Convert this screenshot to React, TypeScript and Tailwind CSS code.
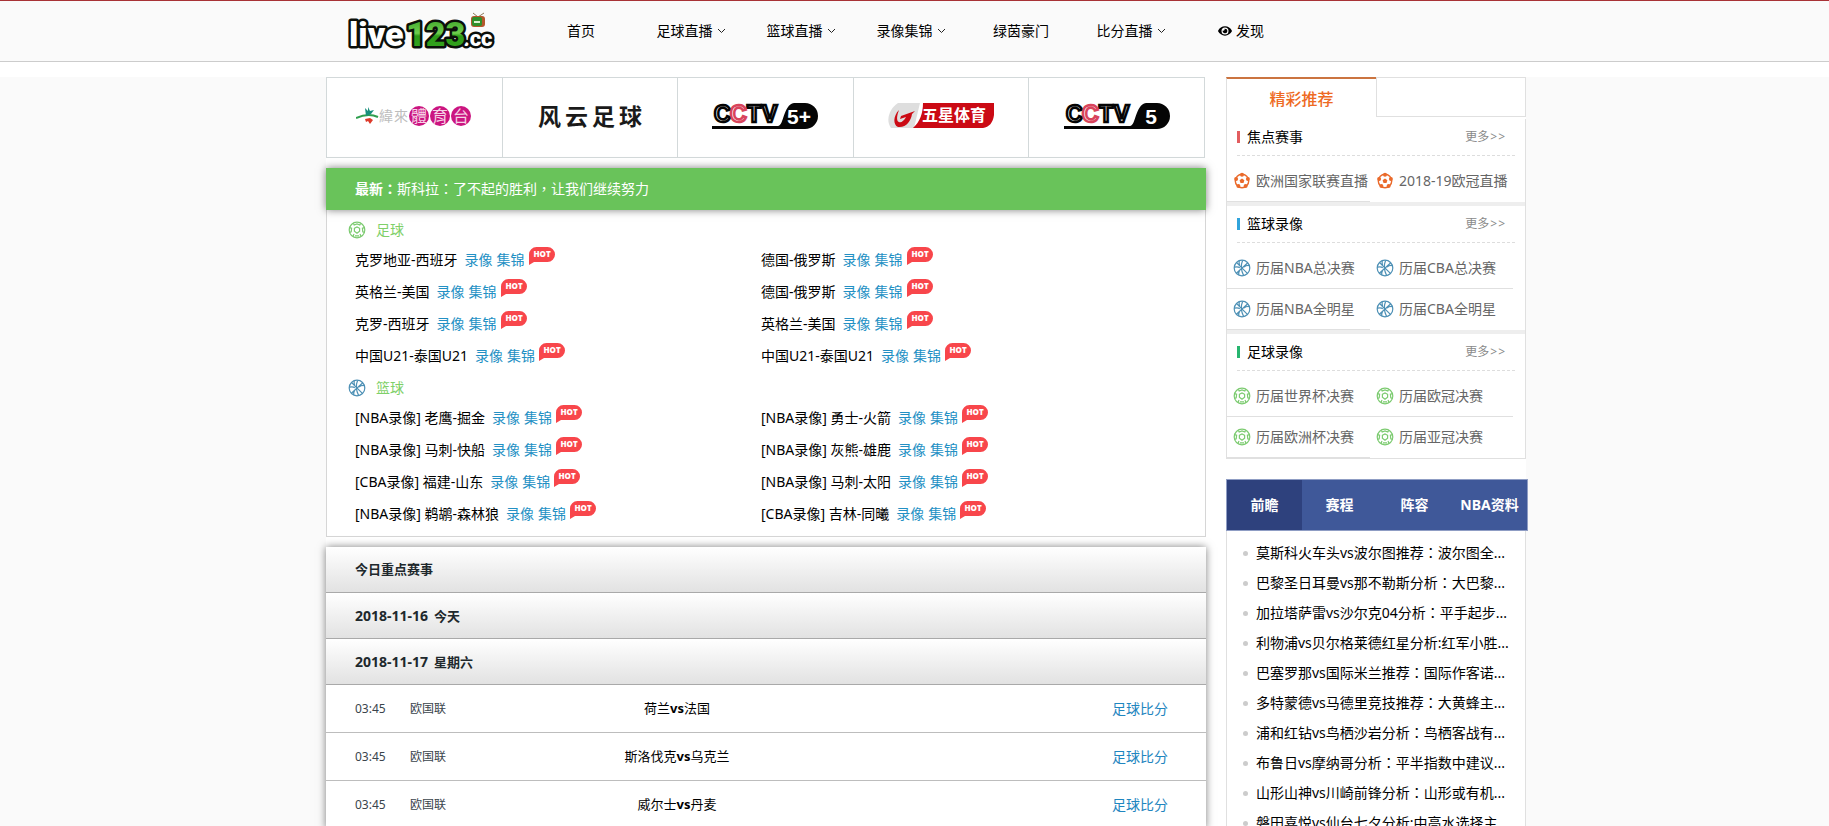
import React from "react";
import { FaEye } from "react-icons/fa";

interface INavItem {
  label: string;
  dropdown?: boolean;
  eye?: boolean;
}

interface ISection {
  title: string;
  bar: string;
  icon: "orange" | "basketball" | "football";
  items: string[];
}

const navItems: INavItem[] = [
  { label: "首页" },
  { label: "足球直播", dropdown: true },
  { label: "篮球直播", dropdown: true },
  { label: "录像集锦", dropdown: true },
  { label: "绿茵豪门" },
  { label: "比分直播", dropdown: true },
  { label: "发现", eye: true },
];

const footballVideos = [
  "克罗地亚-西班牙",
  "德国-俄罗斯",
  "英格兰-美国",
  "德国-俄罗斯",
  "克罗-西班牙",
  "英格兰-美国",
  "中国U21-泰国U21",
  "中国U21-泰国U21",
];

const basketballVideos = [
  "[NBA录像] 老鹰-掘金",
  "[NBA录像] 勇士-火箭",
  "[NBA录像] 马刺-快船",
  "[NBA录像] 灰熊-雄鹿",
  "[CBA录像] 福建-山东",
  "[NBA录像] 马刺-太阳",
  "[NBA录像] 鹈鹕-森林狼",
  "[CBA录像] 吉林-同曦",
];

const matches = [
  { time: "03:45", league: "欧国联", home: "荷兰", away: "法国" },
  { time: "03:45", league: "欧国联", home: "斯洛伐克", away: "乌克兰" },
  { time: "03:45", league: "欧国联", home: "威尔士", away: "丹麦" },
];

const sections: ISection[] = [
  {
    title: "焦点赛事",
    bar: "bg-[#e25d5f]",
    icon: "orange",
    items: ["欧洲国家联赛直播", "2018-19欧冠直播"],
  },
  {
    title: "篮球录像",
    bar: "bg-[#31a4dc]",
    icon: "basketball",
    items: ["历届NBA总决赛", "历届CBA总决赛", "历届NBA全明星", "历届CBA全明星"],
  },
  {
    title: "足球录像",
    bar: "bg-[#27b56f]",
    icon: "football",
    items: ["历届世界杯决赛", "历届欧冠决赛", "历届欧洲杯决赛", "历届亚冠决赛"],
  },
];

const tabs = ["前瞻", "赛程", "阵容", "NBA资料"];

const news = [
  "莫斯科火车头vs波尔图推荐：波尔图全...",
  "巴黎圣日耳曼vs那不勒斯分析：大巴黎...",
  "加拉塔萨雷vs沙尔克04分析：平手起步...",
  "利物浦vs贝尔格莱德红星分析:红军小胜...",
  "巴塞罗那vs国际米兰推荐：国际作客诺...",
  "多特蒙德vs马德里竞技推荐：大黄蜂主...",
  "浦和红钻vs鸟栖沙岩分析：鸟栖客战有...",
  "布鲁日vs摩纳哥分析：平半指数中建议...",
  "山形山神vs川崎前锋分析：山形或有机...",
  "磐田喜悦vs仙台七夕分析:中高水选择主...",
];

// full-width colons and commas sit in the middle of their box in the TC face
function Punctuated({ text }: { text: string }) {
  return (
    <>
      {text.split(/([：，])/).map((part, i) =>
        i % 2 ? (
          <span key={i} className="font-['Noto_Sans_CJK_TC',sans-serif] leading-none">
            {part}
          </span>
        ) : (
          part
        )
      )}
    </>
  );
}

function AngleDown() {
  return (
    <svg viewBox="0 0 9 6" className="h-[6px] w-[9px]" fill="none" stroke="#222" aria-hidden="true">
      <path d="M1 1l3.5 3.5L8 1" />
    </svg>
  );
}

function FootballIcon() {
  return (
    <svg
      viewBox="0 0 18 18"
      className="size-[18px] shrink-0"
      fill="none"
      stroke="#7ccb70"
      strokeWidth="1.2"
      aria-hidden="true"
    >
      <circle cx="9" cy="9" r="7.8" />
      <path d="M6.4 7.3 9 5.9l2.6 1.4v3L9 12.2l-2.6-1.9z" />
      <path d="M5.4 2.4 6.2 4l2.8-1 2.8 1 .8-1.6M1.6 6.6l2 .6-.4 3.6-1.5.6M16.4 6.6l-2 .6.4 3.6 1.5.6M5 15.4l1-2.4M13 15.4l-1-2.4M7 14.8h4" />
    </svg>
  );
}

function BasketballIcon() {
  return (
    <svg
      viewBox="0 0 18 18"
      className="size-[18px] shrink-0"
      fill="none"
      stroke="#4d90b5"
      strokeWidth="1.2"
      aria-hidden="true"
    >
      <circle cx="9" cy="9" r="7.8" />
      <path d="M3.6 3.6 14.4 14.4M14.8 3.8 3.4 14.2M9.6 1.4C8 5 8 11 10.6 16.4M1.4 8.2c2.6-.6 4.2-.4 5.4.6M11 8c1.5-1.4 3-1.8 5.2-1.6M5.6 16c-.2-2.2.2-3.8 1.4-5.2M6.6 6.4C6 5 6 3.6 6.2 2" />
    </svg>
  );
}

function OrangeBallIcon() {
  return (
    <svg viewBox="0 0 18 18" className="size-[18px] shrink-0" fill="#ea6a2b" aria-hidden="true">
      <circle cx="9" cy="9" r="6.7" fill="#fff" stroke="#ea6a2b" strokeWidth="1.4" />
      <path d="M9 6.6l2.4 1.7-.9 2.8h-3l-.9-2.8z" />
      <circle cx="9" cy="2.8" r="2" />
      <circle cx="14.9" cy="7.1" r="2" />
      <circle cx="12.6" cy="14" r="2" />
      <circle cx="5.4" cy="14" r="2" />
      <circle cx="3.1" cy="7.1" r="2" />
    </svg>
  );
}

function HotBadge() {
  return (
    <svg viewBox="0 0 26 18" className="mt-[3px] h-[18px] w-[26px] self-start" role="img" aria-label="HOT">
      <path d="M7.5 0h11a7.5 7.5 0 0 1 0 15H5L0 18V7.5A7.5 7.5 0 0 1 7.5 0z" fill="#f8464b" />
      <text x="13" y="10" textAnchor="middle" fontSize="8" fontWeight="800" fill="#fff" fontFamily="'Open Sans', sans-serif">
        HOT
      </text>
    </svg>
  );
}

function SiteLogo() {
  return (
    <svg viewBox="0 0 150 42" className="h-[42px] w-[150px]" role="img" aria-label="live123.cc">
      <defs>
        <linearGradient id="greenFill" x1="0" y1="0" x2="0" y2="1">
          <stop offset="0" stopColor="#2f9a1c" />
          <stop offset="0.48" stopColor="#6fce4e" />
          <stop offset="0.55" stopColor="#2c9a17" />
          <stop offset="1" stopColor="#38a822" />
        </linearGradient>
      </defs>
      <g
        fontFamily="Roboto, sans-serif"
        fontWeight="900"
        stroke="#0b0f0a"
        strokeWidth="5"
        strokeLinejoin="round"
        paintOrder="stroke"
      >
        <text x="3" y="36" fontSize="34" fill="#fff">
          live
        </text>
        <text x="117" y="36" fontSize="22" fill="#fff">
          .cc
        </text>
        <text x="60" y="36" fontSize="34" fill="url(#greenFill)">
          123
        </text>
      </g>
      <path d="M127 3l5 4 6-4" fill="none" stroke="#8b7a5b" />
      <rect x="125" y="6" width="14" height="11" rx="3" fill="#b4572c" />
      <rect x="126" y="7" width="10" height="9" rx="2" fill="#2f8f2b" />
      <path d="M128 12h6" stroke="#d9f3d0" strokeWidth="2" />
    </svg>
  );
}

function CctvLogo({ channel }: { channel: string }) {
  return (
    <svg viewBox="0 0 106 26" className="h-[26px] w-[106px]" role="img" aria-label={`CCTV ${channel}`}>
      <path d="M0 23h66c6 0 5-21 16-23h11a13 13 0 0 1 0 26H0z" fill="#050505" />
      <g fontFamily="'Liberation Sans', sans-serif" fontWeight="700" fontSize="23" fill="#fff" strokeWidth="2.5">
        <text x="2" y="19" stroke="#050505">
          C
        </text>
        <text x="35" y="19" stroke="#050505">
          T
        </text>
        <text x="50" y="19" stroke="#050505">
          V
        </text>
        <text x="18" y="19" stroke="#d8445c">
          C
        </text>
      </g>
      <text
        x="87"
        y="21"
        textAnchor="middle"
        fontFamily="'Liberation Sans', sans-serif"
        fontWeight="700"
        fontSize="21"
        fill="#fff"
      >
        {channel}
      </text>
    </svg>
  );
}

function VideolandLogo() {
  return (
    <svg viewBox="0 0 116 22" className="h-[22px] w-[116px]" role="img" aria-label="緯來體育台">
      <path d="M0 13c7-3 15-4 22-1" fill="none" stroke="#2f9f4e" strokeWidth="2" />
      <path d="M9 3l3 3V2l2 4 4-1-3 4-5 2z" fill="#178f7c" />
      <path d="M9 14l5-1 3 2-3 4-2-3-2 1z" fill="#dd3a2a" />
      <g fill="#cb1580">
        <circle cx="63" cy="11" r="10" />
        <circle cx="84" cy="11" r="10" />
        <circle cx="105" cy="11" r="10" />
      </g>
      <g fontFamily="'Noto Sans CJK TC', sans-serif" fontSize="14">
        <text x="23" y="16" fill="#bdbdbd">
          緯
        </text>
        <text x="38" y="16" fill="#bdbdbd">
          來
        </text>
        <g fill="#f6d3e6" fontSize="16" textAnchor="middle">
          <text x="63" y="17">
            體
          </text>
          <text x="84" y="17">
            育
          </text>
          <text x="105" y="17">
            台
          </text>
        </g>
      </g>
    </svg>
  );
}

function FiveStarLogo() {
  return (
    <svg viewBox="0 0 106 25" className="h-[25px] w-[106px]" role="img" aria-label="五星体育">
      <path d="M10 0h22L26 25H3C-3 17 2 5 10 0z" fill="#dedede" />
      <path d="M35 0h71v12c-1 8-5 12-11 13H25C32 19 35 10 35 0z" fill="#cb0a14" />
      <path d="M11 7C5 13 5 22 10 24c8 1 13-6 14-13l3-3-14 5-1 3 6-2c-2 4-5 6-7 5-3-1-2-7 0-12z" fill="#cb0a14" />
      <text
        x="66"
        y="18"
        textAnchor="middle"
        fontFamily="'Noto Sans CJK SC', sans-serif"
        fontSize="16"
        fontWeight="700"
        fill="#fff"
      >
        五星体育
      </text>
    </svg>
  );
}

function Channels() {
  const logos = [
    <VideolandLogo />,
    <span className="flex gap-1 text-[23px] leading-6 font-bold text-[#1a1a1a]">
      <span>风</span>
      <span>云</span>
      <span>足</span>
      <span>球</span>
    </span>,
    <CctvLogo channel="5+" />,
    <FiveStarLogo />,
    <CctvLogo channel="5" />,
  ];
  return (
    <div className="mr-px flex h-[81px] border border-l-0 border-[#d3d9da]">
      {logos.map((logo, i) => (
        <a
          key={i}
          href="#"
          className="flex flex-1 items-center justify-center border-l border-[#d3d9da] pb-1"
        >
          {logo}
        </a>
      ))}
    </div>
  );
}

function VideoGroup({ title, icon, items }: { title: string; icon: React.ReactNode; items: string[] }) {
  return (
    <>
      <h3 className="flex h-[30px] items-center gap-[10px] pt-px pl-[21px] text-[#7fd069]">
        {icon}
        {title}
      </h3>
      <ul className="grid grid-cols-2 pr-[38px] pl-[28px]">
        {items.map((item, i) => (
          <li key={i} className="flex h-8 items-center gap-1 pb-px">
            <a href="#" className="mr-[3px] text-black">
              {item}
            </a>
            <a href="#" className="text-[#2390c4]">
              录像
            </a>
            <a href="#" className="text-[#2390c4]">
              集锦
            </a>
            <HotBadge />
          </li>
        ))}
      </ul>
    </>
  );
}

function DateRow({ date, label }: { date?: string; label: string }) {
  return (
    <tr className="h-[46px]">
      <th
        colSpan={4}
        scope="colgroup"
        className="border-b border-[#a9a9a9] bg-linear-to-b from-white to-[#e2e2e2] pl-[29px] text-left text-[13px] text-[#20282c]"
      >
        {date && <span className="mr-[6px] text-sm">{date}</span>}
        {label}
      </th>
    </tr>
  );
}

function Schedule() {
  return (
    <table className="mt-[10px] w-full table-fixed border-separate border-spacing-0 bg-white shadow-[0_0_8px_rgba(0,0,0,0.5)]">
      <colgroup>
        <col className="w-[84px]" />
        <col className="w-[100px]" />
        <col className="w-[334px]" />
        <col />
      </colgroup>
      <tbody>
        <DateRow label="今日重点赛事" />
        <DateRow date="2018-11-16" label="今天" />
        <DateRow date="2018-11-17" label="星期六" />
        {matches.map((match) => (
          <tr key={match.home} className="h-12 text-xs text-[#3a444c]">
            <td className="border-b border-[#bdbdbd] pl-[29px]">{match.time}</td>
            <td className="border-b border-[#bdbdbd]">{match.league}</td>
            <td className="border-b border-[#bdbdbd] text-center text-[13px] text-black">
              {match.home}
              <b>vs</b>
              {match.away}
            </td>
            <td className="border-b border-[#bdbdbd] pr-[38px] text-right text-sm">
              <a href="#" className="text-[#1f86c0]">
                足球比分
              </a>
            </td>
          </tr>
        ))}
      </tbody>
    </table>
  );
}

function SideSection({ section }: { section: ISection }) {
  return (
    <section className="border-b-4 border-[#eee] last:border-b-0">
      <div className="mx-[10px] flex h-[37px] items-center border-b border-dashed border-[#ddd]">
        <span className={`h-3 w-[3px] ${section.bar}`} />
        <h3 className="ml-[7px] text-black">{section.title}</h3>
        <a href="#" className="mr-[10px] ml-auto flex gap-px text-xs text-[#8a8a8a]">
          更多<span>&gt;</span>
          <span>&gt;</span>
        </a>
      </div>
      <ul className="grid grid-cols-2 pt-[5px] pr-3">
        {section.items.map((item) => (
          <li key={item} className="h-[41px] border-b border-[#e0e0e0] last:border-b-0">
            <a href="#" className="flex h-[39px] items-center gap-[5px] pl-[6px] whitespace-nowrap text-[#666]">
              {section.icon === "orange" && <OrangeBallIcon />}
              {section.icon === "basketball" && <BasketballIcon />}
              {section.icon === "football" && <FootballIcon />}
              {item}
            </a>
          </li>
        ))}
      </ul>
    </section>
  );
}

function Sidebar() {
  return (
    <aside className="w-[300px] shrink-0">
      <div className="flex h-[42px]">
        <h2 className="flex w-[150px] items-center justify-center border-t-2 border-l border-t-[#cb7440] border-l-[#e0e0e0] pb-px text-base leading-5 font-medium text-[#ee6a23]">
          精彩推荐
        </h2>
        <div className="h-10 flex-1 border border-[#e0e0e0]" />
      </div>
      <div className="border border-t-0 border-[#e0e0e0]">
        {sections.map((section) => (
          <SideSection key={section.title} section={section} />
        ))}
      </div>
      <div className="mt-5 -mr-[2px] flex h-[52px] border border-[#8f9dc4] bg-[#3f5899]" role="tablist">
        {tabs.map((tab, i) => (
          <button
            key={tab}
            role="tab"
            aria-selected={i === 0}
            className="flex-1 basis-0 pb-px font-bold whitespace-nowrap text-white aria-selected:bg-[#2e417d]"
          >
            {tab}
          </button>
        ))}
      </div>
      <ul className="border-x border-[#e0e0e0] pt-[7px]">
        {news.map((item) => (
          <li key={item} className="flex h-[30px] items-center gap-2 pl-4">
            <span className="size-[5px] rounded-full bg-[#ccc]" />
            <a href="#" className="text-black">
              <Punctuated text={item} />
            </a>
          </li>
        ))}
      </ul>
    </aside>
  );
}

export default function App() {
  return (
    <div className="min-h-screen bg-[#fafafa] font-['Noto_Sans','Noto_Sans_CJK_SC',sans-serif] text-sm">
      <header className="border-t border-b border-t-[#a83236] border-b-[#ccc] pl-[23px]">
        <div className="mx-auto flex h-[60px] max-w-[1200px] items-center">
          <a href="#" className="w-[200px] shrink-0 pl-5">
            <SiteLogo />
          </a>
          <nav className="flex">
            {navItems.map((item) => (
              <a
                key={item.label}
                href="#"
                className="flex w-[110px] items-center justify-center gap-1 text-black"
              >
                {item.eye && <FaEye size={14} />}
                {item.label}
                {item.dropdown && <AngleDown />}
              </a>
            ))}
          </nav>
        </div>
      </header>
      <div className="h-[15px] bg-white" />
      <div className="pl-[23px]">
        <main className="mx-auto flex max-w-[1200px] gap-5 bg-white">
          <div className="min-w-0 flex-1">
            <Channels />
            <div className="relative mt-[10px] flex h-[42px] items-center bg-[#69c35a] pl-[29px] text-white shadow-[0_0_8px_rgba(0,0,0,0.5)]">
              <b>
                <Punctuated text="最新：" />
              </b>
              <a href="#">
                <Punctuated text="斯科拉：了不起的胜利，让我们继续努力" />
              </a>
            </div>
            <div className="border border-t-0 border-[#d6d6d6] pt-1 pb-[6px]">
              <VideoGroup title="足球" icon={<FootballIcon />} items={footballVideos} />
              <VideoGroup title="篮球" icon={<BasketballIcon />} items={basketballVideos} />
            </div>
            <Schedule />
          </div>
          <Sidebar />
        </main>
      </div>
    </div>
  );
}
